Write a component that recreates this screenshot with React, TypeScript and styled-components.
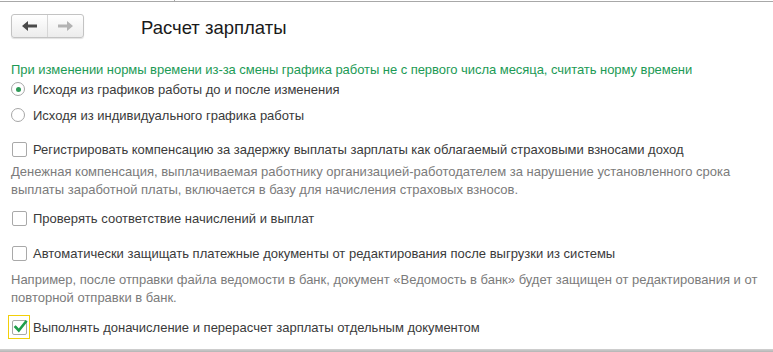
import styled, { createGlobalStyle } from 'styled-components'

const GlobalStyle = createGlobalStyle`
   html, body {
      margin: 0;
      padding: 0;
      background: #ffffff;
   }
   body {
      font-family: "Liberation Sans", Arial, sans-serif;
      font-size: 13px;
      color: #3a3a3a;
   }
`

const Page = styled.div`
   width: 773px;
   height: 352px;
   display: flex;
   flex-direction: column;
   overflow: hidden;
`

const TopEdge = styled.div`
   height: 1px;
   margin-top: 1px;
   background: #a8a8a8;
   display: flex;
`

const Tick = styled.div`
   width: 1px;
   height: 1px;
   margin-left: 174px;
   margin-top: -1px;
   background: #a8a8a8;
`

const Content = styled.div`
   flex: 1;
   padding: 12px 11px 0 11px;
   display: flex;
   flex-direction: column;
`

const Header = styled.div`
   display: flex;
   align-items: center;
   height: 24px;
`

const NavGroup = styled.div`
   display: flex;
   width: 73px;
   height: 24px;
   box-sizing: border-box;
   border: 1px solid #c3c3c3;
   border-radius: 3px;
   background: linear-gradient(#ffffff, #ececec);
   box-shadow: 0 1px 1px rgba(0, 0, 0, 0.12);
`

const NavButton = styled.div<{ $divider?: boolean }>`
   flex: 1;
   display: flex;
   align-items: center;
   justify-content: center;
   border-right: ${(p) => (p.$divider ? '1px solid #d6d6d6' : 'none')};
`

const Title = styled.h1`
   margin: 0 0 0 57px;
   font-size: 18.5px;
   font-weight: normal;
   color: #1a1a1a;
   padding-top: 4px;
`

const GroupTitle = styled.div`
   margin-top: 24px;
   line-height: 16px;
   letter-spacing: -0.05px;
   color: #1c9a55;
`

const OptionRow = styled.label<{ $gap?: number }>`
   display: flex;
   align-items: center;
   height: 24px;
   margin-top: ${(p) => p.$gap ?? 0}px;
`

const Radio = styled.span<{ $checked?: boolean }>`
   width: 14px;
   height: 14px;
   box-sizing: border-box;
   border-radius: 50%;
   border: 1px solid #a6a6a6;
   background: #ffffff;
   display: flex;
   align-items: center;
   justify-content: center;
   margin-right: 8px;
   &::after {
      content: '';
      width: 5px;
      height: 5px;
      border-radius: 50%;
      background: ${(p) => (p.$checked ? '#2e9a57' : 'transparent')};
   }
`

const BoxWrap = styled.span<{ $focused?: boolean }>`
   width: 22px;
   height: 24px;
   box-sizing: border-box;
   margin-left: -3px;
   margin-right: 3px;
   display: flex;
   align-items: center;
   justify-content: center;
   border: 1px solid ${(p) => (p.$focused ? '#f2cf0a' : 'transparent')};
`

const Box = styled.span`
   width: 15px;
   height: 15px;
   box-sizing: border-box;
   border: 1px solid #a9a9a9;
   border-radius: 2px;
   background: #ffffff;
   position: relative;
`

const Check = styled.svg`
   position: absolute;
   left: 0px;
   top: -2px;
`

const Note = styled.p<{ $gap?: number }>`
   margin: ${(p) => p.$gap ?? 0}px 0 0 0;
   line-height: 18px;
   color: #7b7b7b;
`

const BottomEdge = styled.div`
   height: 3px;
   background: linear-gradient(#d2d2d2, #b4b4b4);
`

function Arrow({ dir, color }: { dir: 'left' | 'right'; color: string }) {
   return (
      <svg width="15" height="10" viewBox="0 0 15 10">
         <g transform={dir === 'right' ? 'translate(15 0) scale(-1 1)' : undefined}>
            <path d="M0 5 L6 0 L6 3.5 L15 3.5 L15 6.5 L6 6.5 L6 10 Z" fill={color} />
         </g>
      </svg>
   )
}

function CheckBox({ checked, focused }: { checked?: boolean; focused?: boolean }) {
   return (
      <BoxWrap $focused={focused}>
         <Box>
            {checked && (
               <Check width="15" height="15" viewBox="0 0 15 15">
                  <path d="M2.5 8 L5.8 11.5 L12.8 2.8" fill="none" stroke="#1f9e4c" strokeWidth="2.6" strokeLinecap="square" />
               </Check>
            )}
         </Box>
      </BoxWrap>
   )
}

export default function App() {
   return (
      <>
         <GlobalStyle />
         <Page>
            <TopEdge>
               <Tick />
            </TopEdge>
            <Content>
               <Header>
                  <NavGroup>
                     <NavButton $divider>
                        <Arrow dir="left" color="#4a4a4a" />
                     </NavButton>
                     <NavButton>
                        <Arrow dir="right" color="#b3b3b3" />
                     </NavButton>
                  </NavGroup>
                  <Title>Расчет зарплаты</Title>
               </Header>

               <GroupTitle>
                  При изменении нормы времени из-за смены графика работы не с первого числа месяца, считать норму времени
               </GroupTitle>
               <OptionRow $gap={-1}>
                  <Radio $checked />
                  Исходя из графиков работы до и после изменения
               </OptionRow>
               <OptionRow $gap={2}>
                  <Radio />
                  Исходя из индивидуального графика работы
               </OptionRow>

               <OptionRow $gap={10}>
                  <CheckBox />
                  Регистрировать компенсацию за задержку выплаты зарплаты как облагаемый страховыми взносами доход
               </OptionRow>
               <Note $gap={2}>
                  Денежная компенсация, выплачиваемая работнику организацией-работодателем за нарушение установленного срока
                  <br />
                  выплаты заработной платы, включается в базу для начисления страховых взносов.
               </Note>

               <OptionRow $gap={7}>
                  <CheckBox />
                  Проверять соответствие начислений и выплат
               </OptionRow>

               <OptionRow $gap={11}>
                  <CheckBox />
                  Автоматически защищать платежные документы от редактирования после выгрузки из системы
               </OptionRow>
               <Note $gap={6}>
                  Например, после отправки файла ведомости в банк, документ «Ведомость в банк» будет защищен от редактирования и от
                  <br />
                  повторной отправки в банк.
               </Note>

               <OptionRow $gap={8}>
                  <CheckBox checked focused />
                  Выполнять доначисление и перерасчет зарплаты отдельным документом
               </OptionRow>
            </Content>
            <BottomEdge />
         </Page>
      </>
   )
}
